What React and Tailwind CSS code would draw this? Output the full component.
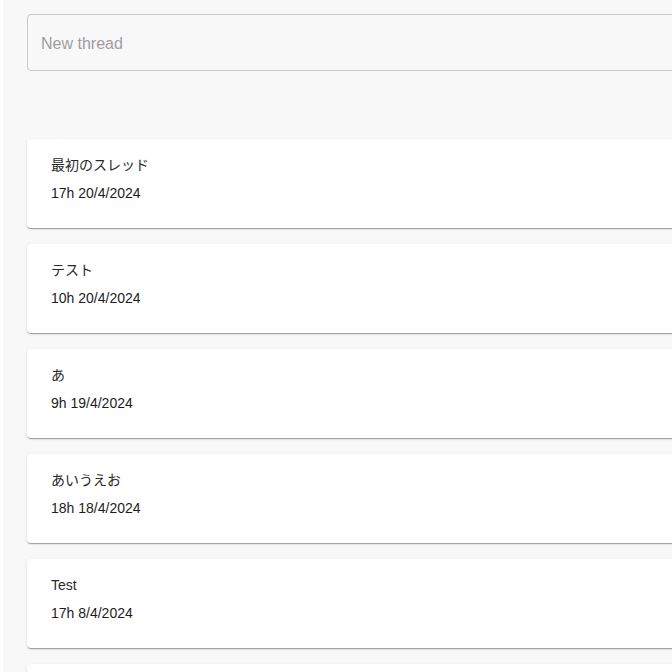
import React from 'react';

const threads = [
  { id: 1, title: '最初のスレッド', time: '17h 20/4/2024' },
  { id: 2, title: 'テスト', time: '10h 20/4/2024' },
  { id: 3, title: 'あ', time: '9h 19/4/2024' },
  { id: 4, title: 'あいうえお', time: '18h 18/4/2024' },
  { id: 5, title: 'Test', time: '17h 8/4/2024' },
];

const cardClass =
  'bg-white rounded shadow-[0_2px_1px_-1px_rgba(0,0,0,0.2),0_1px_1px_0_rgba(0,0,0,0.14),0_1px_3px_0_rgba(0,0,0,0.12)]';

const ThreadCard = ({ thread }) => (
  <div className={`${cardClass} px-6 pt-4 pb-[25px]`}>
    <p className="text-sm leading-5 text-[#2a2a2a]">{thread.title}</p>
    <p className="text-sm leading-5 text-[#1c1c1c] mt-2">{thread.time}</p>
  </div>
);

export default function App() {
  return (
    <div
      className="h-[672px] w-[672px] overflow-hidden bg-[#f8f8f8] border-l-[3px] border-white"
      style={{ fontFamily: '"Liberation Sans", Arial, "Noto Sans CJK JP", sans-serif' }}
    >
      <div className="w-[720px] pl-6 pt-[14px]">
        <input
          type="text"
          placeholder="New thread"
          className="block w-full h-[57px] rounded border border-[#cbcbcb] bg-transparent px-[13px] pt-[2px] text-base text-[#222] placeholder:text-[#9e9e9e] outline-none"
        />
        <div className="mt-[68px] flex flex-col gap-4">
          {threads.map((thread) => (
            <ThreadCard key={thread.id} thread={thread} />
          ))}
          {/* next card, only its top edge is in view */}
          <div className={`${cardClass} h-[89px]`} />
        </div>
      </div>
    </div>
  );
}
